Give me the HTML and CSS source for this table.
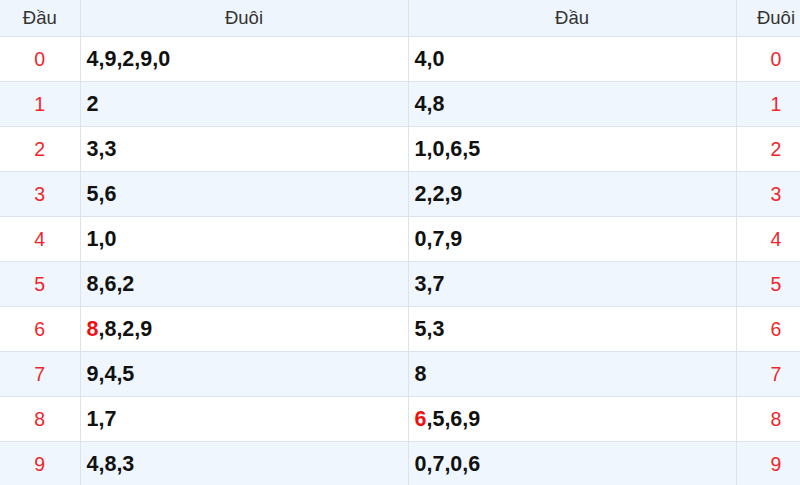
FILE: index.html
```html
<!DOCTYPE html>
<html lang="vi">
<head>
<meta charset="utf-8">
<title>Đầu Đuôi</title>
<link rel="stylesheet" href="styles.css">
</head>
<body>
<table class="lo-table">
  <colgroup>
    <col class="c-num"><col class="c-val"><col class="c-val"><col class="c-num">
  </colgroup>
  <thead>
    <tr><th>Đầu</th><th>Đuôi</th><th>Đầu</th><th>Đuôi</th></tr>
  </thead>
  <tbody>
    <tr><td class="num">0</td><td class="val">4,9,2,9,0</td><td class="val">4,0</td><td class="num">0</td></tr>
    <tr><td class="num">1</td><td class="val">2</td><td class="val">4,8</td><td class="num">1</td></tr>
    <tr><td class="num">2</td><td class="val">3,3</td><td class="val">1,0,6,5</td><td class="num">2</td></tr>
    <tr><td class="num">3</td><td class="val">5,6</td><td class="val">2,2,9</td><td class="num">3</td></tr>
    <tr><td class="num">4</td><td class="val">1,0</td><td class="val">0,7,9</td><td class="num">4</td></tr>
    <tr><td class="num">5</td><td class="val">8,6,2</td><td class="val">3,7</td><td class="num">5</td></tr>
    <tr><td class="num">6</td><td class="val"><span class="hl">8</span>,8,2,9</td><td class="val">5,3</td><td class="num">6</td></tr>
    <tr><td class="num">7</td><td class="val">9,4,5</td><td class="val">8</td><td class="num">7</td></tr>
    <tr><td class="num">8</td><td class="val">1,7</td><td class="val"><span class="hl">6</span>,5,6,9</td><td class="num">8</td></tr>
    <tr><td class="num">9</td><td class="val">4,8,3</td><td class="val">0,7,0,6</td><td class="num">9</td></tr>
  </tbody>
</table>
</body>
</html>
```
FILE: styles.css
```css
html, body {
  margin: 0;
  padding: 0;
  background: #fff;
  overflow: hidden;
}
body {
  font-family: "Liberation Sans", Arial, sans-serif;
  width: 800px;
  height: 485px;
}
.lo-table {
  border-collapse: collapse;
  table-layout: fixed;
  width: 816px;
}
.c-num { width: 80px; }
.c-val { width: 328px; }
.lo-table th,
.lo-table td {
  border: 1px solid #dde3ea;
  padding: 0;
}
.lo-table tr > :first-child { border-left: none; }
.lo-table thead tr > * { border-top: none; }
.lo-table th {
  height: 36px;
  background: #eef5fc;
  color: #333;
  font-weight: normal;
  font-size: 18.5px;
  text-align: center;
}
.lo-table td {
  height: 44px;
  font-size: 21.5px;
}
.lo-table tbody tr:nth-child(even) td {
  background: #eff6fe;
}
.lo-table td.num {
  color: #f0262b;
  text-align: center;
  font-size: 19.5px;
}
.val {
  color: #111;
  font-weight: bold;
  padding-left: 6px !important;
}
.hl {
  color: #ee1111;
}
```
